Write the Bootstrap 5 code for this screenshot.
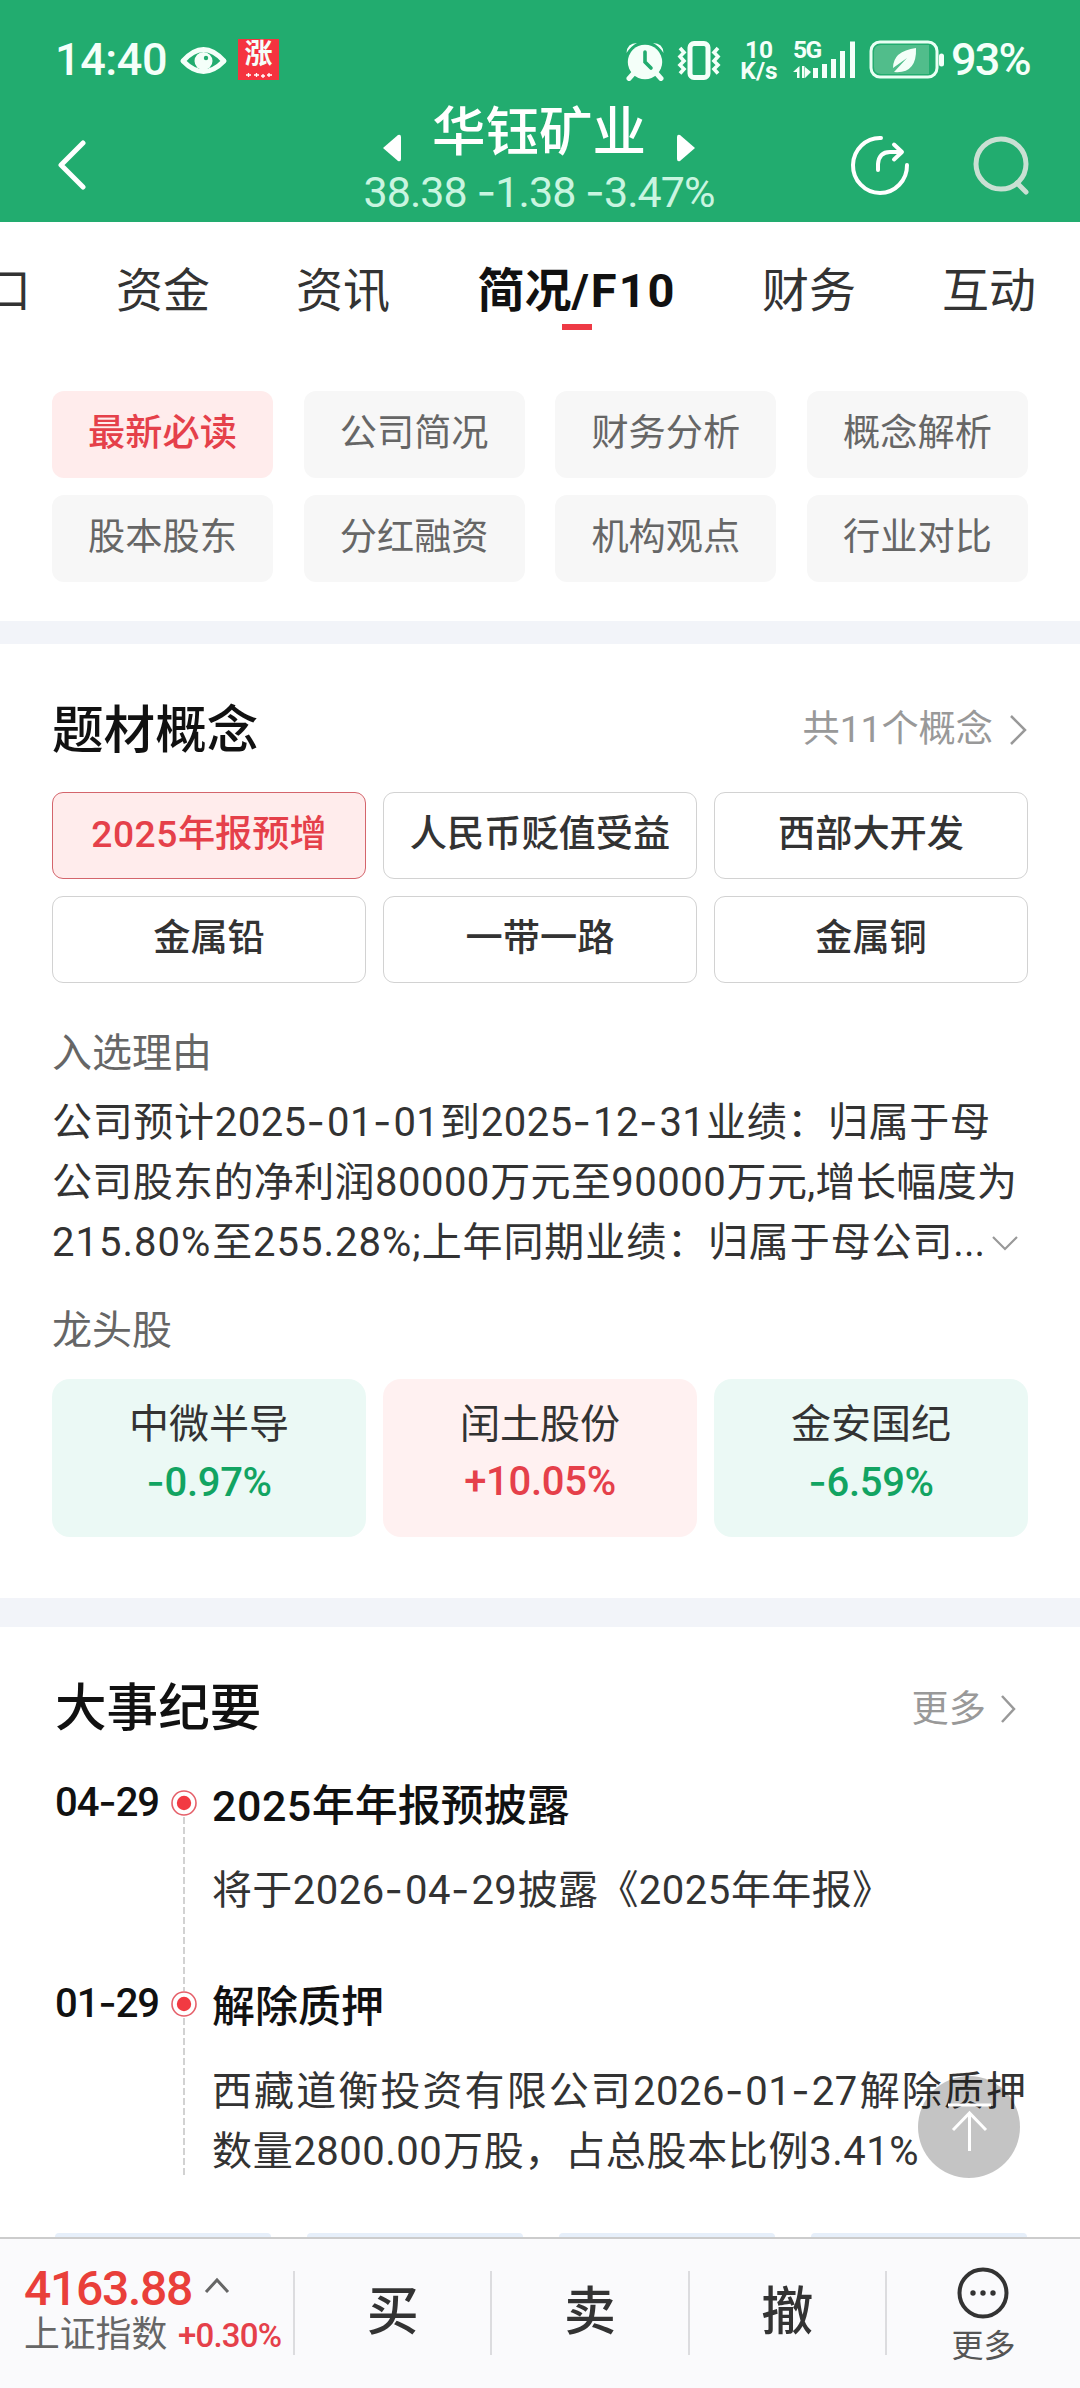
<!DOCTYPE html>
<html lang="zh-CN">
<head>
<meta charset="utf-8">
<meta name="viewport" content="width=device-width, initial-scale=1">
<title>华钰矿业</title>
<link rel="stylesheet" href="https://cdn.jsdelivr.net/npm/bootstrap@5.3.0/dist/css/bootstrap.min.css">
<style>
body{width:1080px;height:2388px;overflow:hidden;background:#fff;color:#333;font-family:Roboto,"Noto Sans CJK SC",sans-serif;font-size:40px;line-height:60px}
svg{display:block;flex:none}
.app{height:2388px}
.topbar{height:222px;background:#22ac6f;color:#fff}
.statusbar{height:80px;padding:38px 51px 0 55px;color:#f4fff9}
.clock{font-size:45px;font-weight:500;line-height:44px;width:116px;letter-spacing:-.4px}
.rise{width:41px;height:41px;background:#f5333f;font-size:28px;line-height:32px;font-weight:700}
.speed{width:42px;font-size:24.5px;line-height:20.5px;font-weight:700}
.pct{font-size:45px;font-weight:500;line-height:44px;letter-spacing:-1.8px;width:78px}
.titlerow{height:142px;padding:0 48px 0 57px}
.stockname{font-size:53.5px;font-weight:500;line-height:60px;padding-top:1px}
.quote{font-size:43px;line-height:44px;color:#c9f5e0;white-space:nowrap;letter-spacing:-.95px}
.hy{font-family:Inter,sans-serif;font-style:normal}
.num{letter-spacing:.5px}
.num .hy{letter-spacing:2px}
.tabs-row{height:169px;font-size:47px;white-space:nowrap}
.tabs-row>span{flex:none;height:60px;line-height:60px}
.tab-on{color:#111;font-weight:700}
.tab-on i{font-style:normal;letter-spacing:2px}
.tab-mark{width:30px;height:6px;background:#ee3a45;margin-top:3px}
.menu-grid{display:grid;grid-template-columns:repeat(4,221px);justify-content:space-between;row-gap:17px;padding:0 52px;height:230px;grid-auto-rows:87px}
.menu-grid>span{background:#f7f7f7;border-radius:12px;color:#666;font-size:37.2px;line-height:84px;text-align:center}
.menu-grid>span.on{background:#ffecec;color:#e5404a;font-weight:500}
.band{background:#f2f4f9}
.sec-title{font-size:51.6px;font-weight:500;color:#111;margin:0;line-height:60px}
.more-link{color:#999;font-size:37.2px;line-height:60px}
.tri-grid{display:grid;grid-template-columns:repeat(3,314px);justify-content:space-between}
.chips{row-gap:17px;grid-auto-rows:87px}
.chips>span{border:1.5px solid #d2d2d2;border-radius:11px;color:#333;text-align:center;font-size:37.2px;font-weight:500;line-height:82px;white-space:nowrap}
.chips>span.on{background:#ffecec;border-color:#d4656c;color:#e5404a}
.label6{color:#666;line-height:60px}
.ln{display:block;line-height:60.5px;height:60.5px;text-align-last:justify;white-space:nowrap}
.leader{height:158px;border-radius:18px;text-align:center;padding-top:16px}
.leader b{display:block;font-weight:500;line-height:54px;letter-spacing:-.3px}
.leader span{display:block;line-height:60px}
.lf{background:#ebf9f5}.lf b{color:#12a462}
.lr{background:#fff1f1}.lr b{color:#e5404a}
.ev-date{width:113px;color:#111;font-weight:500;line-height:60px;letter-spacing:-1.1px}
.ev-line{width:32px;margin-right:12px}
.dash{flex:1;width:1.4px;background:repeating-linear-gradient(#d2d2d2 0 7px,transparent 7px 10px)}
.ev-title{font-size:43px;font-weight:500;color:#111;line-height:60px;margin:0}
.peek{padding:0 53px 0 55px;height:4px}
.peek i{width:216px;height:4px;border-radius:6px 6px 0 0;background:#e6effa}
.totop{position:absolute;left:918px;top:2076px;width:102px;height:102px;border-radius:50%;background:rgba(0,0,0,.23)}
.bottombar{height:151px;border-top:2px solid #ccc;background:#fafafc}
.bottombar>div{flex:none}
.idx{width:293px;padding:30px 0 0 24px;white-space:nowrap}
.idx-v{font-size:48px;line-height:40px;color:#e93f3a;font-weight:500;letter-spacing:-1.3px;width:171px}
.trade{width:197.3px;height:84px;margin-top:32px;border-left:2px solid #dcdcdf;font-size:52px;font-weight:500;line-height:84px;text-align:center}
</style>
</head>
<body>
<div class="app d-flex flex-column position-relative">
  <header class="topbar flex-shrink-0">
    <div class="statusbar d-flex">
      <div class="clock">14:40</div>
      <svg class="ms-2" style="margin-top:7px" width="49" height="32" viewBox="0 0 49 32"><path d="M4 16Q24.500-7 45 16Q24.500 37 4 16Z" fill="none" stroke="#f4fff9" stroke-width="5" stroke-linejoin="round"/><circle cx="24.500" cy="16" r="9" fill="#f4fff9"/><circle cx="27" cy="13" r="2.200" fill="#22ac6f"/></svg>
      <div class="rise text-center position-relative" style="margin:1px 0 0 10px">涨<svg class="position-absolute start-0 bottom-0" width="41" height="9" viewBox="0 0 41 9"><path d="M8 4h5M10.500 2v4M16 4h5M18.500 2v4M23 5h4M25 3v4M29 4h5M31 2v4" stroke="#fff" stroke-width="1.300"/></svg></div>
      <svg class="ms-auto" style="margin-top:3px" width="40" height="40" viewBox="0 0 40 40"><g fill="#f4fff9"><circle cx="20" cy="21" r="17.200"/><path d="M1.500 12Q2 2 12 2Q6 5 1.500 12ZM38.500 12Q38 2 28 2Q34 5 38.500 12Z"/></g><path d="m8 33-4 4.500M32 33l4 4.500" stroke="#f4fff9" stroke-width="5" stroke-linecap="round"/><path d="M20 11v10l6 6" fill="none" stroke="#22ac6f" stroke-width="3.600" stroke-linecap="round"/></svg>
      <svg style="margin:3px 0 0 12px" width="44" height="40" viewBox="0 0 44 40" fill="none" stroke="#f4fff9"><rect x="13" y="2.500" width="18" height="34" rx="4" stroke-width="5"/><path d="m3 7 4 4.500-4 4 4 4.500-4 4 4 4-4 4.500M41 7l-4 4.500 4 4-4 4.500 4 4-4 4 4 4.500" stroke-width="3.600"/></svg>
      <div class="speed text-center" style="margin:2px 0 0 17px"><div>10</div><div>K/s</div></div>
      <div class="position-relative" style="margin:2px 0 0 13px;width:65px;height:40px">
        <div class="speed text-start" style="letter-spacing:-1.5px">5G</div>
        <svg class="position-absolute start-0 top-0" width="65" height="40" viewBox="0 0 65 40" fill="#f4fff9"><path d="M6.500 26v12H4v-6H0ZM11.500 26v12H9V26ZM12 27l6 5-6 6ZM20 28h5v10h-5ZM29 24h5v14h-5ZM38 19h5v19h-5ZM47 11h5v27h-5ZM57 1.500h5V38h-5Z"/></svg>
      </div>
      <svg style="margin:2px 0 0 11px" width="78" height="40" viewBox="0 0 78 40"><rect x="2" y="2" width="66" height="35" rx="9" fill="none" stroke="#e9fff4" stroke-width="3"/><path d="M12 5H60V34H12Q5 34 5 27V12Q5 5 12 5Z" fill="#51bd8b"/><rect x="70" y="13.500" width="5" height="13" rx="2.500" fill="#f4fff9"/><path d="M47 8Q24 11 24 28L38 18 25 32Q48 34 47 8Z" fill="#f4fff9"/></svg>
      <div class="pct" style="margin-left:4px">93%</div>
    </div>
    <div class="titlerow d-flex">
      <svg style="margin-top:60px" width="30" height="50" viewBox="0 0 30 50"><path d="M26 3 4 25l22 22" fill="none" stroke="#fff" stroke-width="5" stroke-linecap="round" stroke-linejoin="round"/></svg>
      <div class="d-flex flex-column align-items-center" style="margin-left:271px;width:362px;padding-top:22px">
        <div class="d-flex">
          <svg style="margin:32px 31px 0 0" width="19" height="28" viewBox="0 0 19 28"><path d="M1 14 16 1Q19 0 19 3V25Q19 28 16 27Z" fill="#fff"/></svg>
          <div class="stockname">华钰矿业</div>
          <svg style="margin:32px 0 0 31px" width="19" height="28" viewBox="0 0 19 28"><path d="M18 14 3 1Q0 0 0 3V25Q0 28 3 27Z" fill="#fff"/></svg>
        </div>
        <div class="quote" style="margin-top:6px">38.38 <i class="hy">-</i>1.38 <i class="hy">-</i>3.47%</div>
      </div>
      <svg style="margin:53px 0 0 127px" width="64" height="64" viewBox="0 0 64 64" fill="none" stroke="#fff" stroke-width="4" stroke-linecap="round" stroke-linejoin="round"><path d="M34 5A27 27.500 0 1 0 60 32"/><path d="M31 37V31Q32 19 43 19H54M47 11.500l8 7.500-8 7.500"/></svg>
      <svg style="margin:53px 0 0 60px" width="60" height="64" viewBox="0 0 60 64" fill="none" stroke="#c9e0d3" stroke-width="5"><circle cx="30" cy="31" r="25"/><path d="m46 50 9 9" stroke-linecap="round"/></svg>
    </div>
  </header>

  <nav class="tabs-row d-flex flex-shrink-0" style="padding-top:39px">
    <span style="margin-left:-16px;width:132px">口</span>
    <span style="width:180px">资金</span>
    <span style="width:179px">资讯</span>
    <div class="d-flex flex-column align-items-center" style="width:204px;margin-right:83px"><span class="tab-on">简况<i>/F10</i></span><div class="tab-mark"></div></div>
    <span style="width:180px">财务</span>
    <span>互动</span>
  </nav>
  <div class="menu-grid flex-shrink-0">
    <span class="on">最新必读</span><span>公司简况</span><span>财务分析</span><span>概念解析</span>
    <span>股本股东</span><span>分红融资</span><span>机构观点</span><span>行业对比</span>
  </div>
  <div class="band flex-shrink-0" style="height:23px"></div>

  <section class="flex-shrink-0" style="height:954px;padding:57px 52px 0">
    <div class="d-flex justify-content-between" style="height:91px">
      <h2 class="sec-title">题材概念</h2>
      <div class="more-link d-flex" style="margin-top:-2px">共11个概念<svg style="margin:15px 0 0 15px" width="20" height="32" viewBox="0 0 20 32"><path d="m3 2 14 14L3 30" fill="none" stroke="#999" stroke-width="2.500"/></svg></div>
    </div>
    <div class="tri-grid chips">
      <span class="on"><span class="num">2025</span>年报预增</span><span>人民币贬值受益</span><span>西部大开发</span>
      <span>金属铅</span><span>一带一路</span><span>金属铜</span>
    </div>
    <div class="label6" style="margin-top:41px">入选理由</div>
    <div style="margin-top:8px">
      <span class="ln" style="width:938px">公司预计<span class="num">2025<i class="hy">-</i>01<i class="hy">-</i>01</span>到<span class="num">2025<i class="hy">-</i>12<i class="hy">-</i>31</span>业绩：归属于母</span>
      <span class="ln" style="width:965px">公司股东的净利润<span class="num">80000</span>万元至<span class="num">90000</span>万元,增长幅度为</span>
      <div class="d-flex"><span class="ln" style="width:933px"><span style="letter-spacing:1px">215.80%</span>至<span style="letter-spacing:1px">255.28%</span>;上年同期业绩：归属于母公司...</span><svg style="margin:22px 0 0 6px" width="28" height="18" viewBox="0 0 28 18"><path d="m2 2 12 12L26 2" fill="none" stroke="#999" stroke-width="2.200"/></svg></div>
    </div>
    <div class="label6" style="margin-top:27px">龙头股</div>
    <div class="tri-grid" style="margin-top:18px">
      <div class="leader lf"><span>中微半导</span><b><i class="hy">-</i>0.97%</b></div>
      <div class="leader lr"><span>闰土股份</span><b>+10.05%</b></div>
      <div class="leader lf"><span>金安国纪</span><b><i class="hy">-</i>6.59%</b></div>
    </div>
  </section>
  <div class="band flex-shrink-0" style="height:29px"></div>

  <section class="flex-grow-1" style="padding:51px 52px 0 55px">
    <div class="d-flex justify-content-between" style="height:94px">
      <h2 class="sec-title" style="padding-top:1px">大事纪要</h2>
      <div class="more-link d-flex" style="padding:1px 11px 0 0">更多<svg style="margin:16px 0 0 13px" width="18" height="28" viewBox="0 0 18 28"><path d="m3 1 12 13L3 27" fill="none" stroke="#999" stroke-width="2.500"/></svg></div>
    </div>
    <div class="d-flex" style="height:201px">
      <div class="ev-date">04<i class="hy">-</i>29</div>
      <div class="ev-line d-flex flex-column align-items-center" style="margin-top:-4px;margin-bottom:-18px"><svg style="margin-top:20.500px" width="28" height="28" viewBox="0 0 28 28"><circle cx="14" cy="14" r="12" fill="#fff" stroke="#e5606a" stroke-width="1.600"/><circle cx="14" cy="14" r="7.200" fill="#f23a42"/></svg><div class="dash"></div></div>
      <div>
        <h3 class="ev-title" style="margin-top:4px"><span class="num">2025</span>年年报预披露</h3>
        <span class="ln" style="width:680px;margin-top:24px">将于<span class="num">2026<i class="hy">-</i>04<i class="hy">-</i>29</span>披露《<span class="num">2025</span>年年报》</span>
      </div>
    </div>
    <div class="d-flex" style="height:212px">
      <div class="ev-date">01<i class="hy">-</i>29</div>
      <div class="ev-line d-flex flex-column align-items-center" style="margin-top:-4px;height:207px"><svg style="margin-top:20.500px" width="28" height="28" viewBox="0 0 28 28"><circle cx="14" cy="14" r="12" fill="#fff" stroke="#e5606a" stroke-width="1.600"/><circle cx="14" cy="14" r="7.200" fill="#f23a42"/></svg><div class="dash"></div></div>
      <div>
        <h3 class="ev-title" style="margin-top:4px">解除质押</h3>
        <span class="ln" style="width:814px;margin-top:24px">西藏道衡投资有限公司<span class="num">2026<i class="hy">-</i>01<i class="hy">-</i>27</span>解除质押</span>
        <span class="ln" style="width:707px">数量<span class="num">2800.00</span>万股，占总股本比例<span class="num">3.41%</span></span>
      </div>
    </div>
  </section>
  <div class="peek d-flex justify-content-between flex-shrink-0"><i></i><i></i><i></i><i></i></div>

  <footer class="bottombar d-flex flex-shrink-0">
    <div class="idx">
      <div class="d-flex"><div class="idx-v">4163.88</div><svg style="margin:8px 0 0 8px" width="28" height="18" viewBox="0 0 28 18"><path d="M3 15 14 3l11 12" fill="none" stroke="#666" stroke-width="3"/></svg></div>
      <div class="d-flex" style="line-height:44px;margin-top:4px"><span style="font-size:35.800px;color:#666;width:154px">上证指数</span><span style="font-size:33px;color:#e5404a;font-weight:500;letter-spacing:-.8px;padding-top:1px">+0.30%</span></div>
    </div>
    <div class="trade">买</div>
    <div class="trade">卖</div>
    <div class="trade">撤</div>
    <div class="trade d-flex flex-column align-items-center" style="width:195px"><svg style="margin-top:-5px" width="54" height="54" viewBox="0 0 54 54"><circle cx="27" cy="27" r="23.500" fill="none" stroke="#333" stroke-width="4"/><g fill="#333"><circle cx="17" cy="27" r="2.700"/><circle cx="27" cy="27" r="2.700"/><circle cx="37" cy="27" r="2.700"/></g></svg><span class="fw-normal" style="font-size:32px;line-height:40px;margin-top:6px;color:#555">更多</span></div>
  </footer>

  <a class="totop" aria-label="返回顶部"><svg width="102" height="102" viewBox="0 0 102 102" fill="none" stroke="#fff" stroke-width="3"><path d="M30 29h43M51.500 75V37M35 54l16.500-17L68 54"/></svg></a>
</div>
<script src="https://cdn.jsdelivr.net/npm/bootstrap@5.3.0/dist/js/bootstrap.bundle.min.js"></script>
</body>
</html>
